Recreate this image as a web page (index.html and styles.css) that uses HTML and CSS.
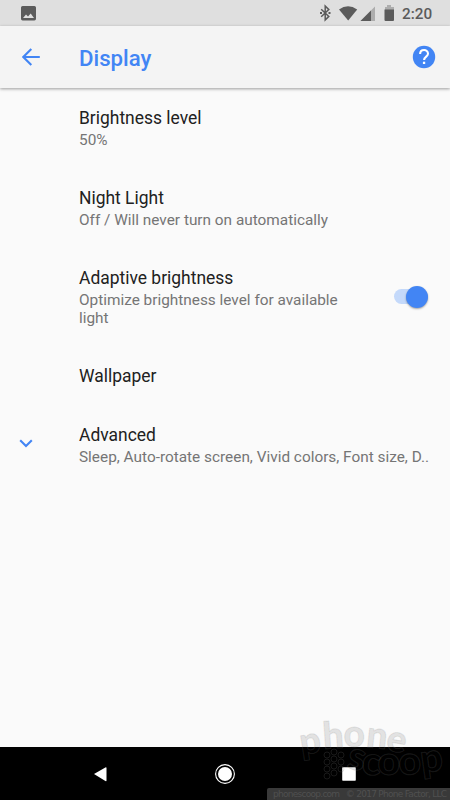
FILE: index.html
```html
<!DOCTYPE html>
<html lang="en">
<head>
<meta charset="utf-8">
<title>Display</title>
<link rel="stylesheet" href="styles.css">
</head>
<body>
<div class="screen">
  <div class="status">
    <svg class="picture" viewBox="0 0 15 15"><path fill-rule="evenodd" d="M1.6 0h11.8Q15 0 15 1.6v11.2q0 1.6-1.6 1.6H1.6Q0 14.400 0 12.800V1.600Q0 0 1.600 0zM2 12h11L9.700 7.400 7 10.600 5 8.600z"/></svg>
    <svg class="indicators" viewBox="0 0 80 18">
      <path class="bt" d="M2.200 5.200l7.600 7.200-3.600 3.600V2l3.600 3.600-7.600 7.200"/><path d="M1 8.100h2v2H1zM9.500 8.100h2v2h-2z"/>
      <path d="M20 5.400Q29 -1 38.200 5.400L29.200 16.500z"/>
      <path d="M41.500 17L56 2.500V17z" opacity=".38"/><path d="M41.500 17L52 6.500V17z"/>
      <path d="M68 1h4v2h3v4h-9V3h2z" opacity=".38"/><path d="M65.500 5.500h9.500V16q0 1-1 1h-7.500q-1 0-1-1z"/>
    </svg>
    <span class="time">2:20</span>
  </div>
  <header class="toolbar">
    <svg class="back" viewBox="0 0 18 18"><path d="M9.300 .9L1.300 9l8 8M1.300 9h16.500"/></svg>
    <h1>Display</h1>
    <svg class="help" viewBox="0 0 24 24"><circle cx="12" cy="12" r="11.200"/><path d="M8.100 9.100C8.100 3.700 16 3.800 16 8.800c0 2.700-3.900 3-3.900 6.200"/><path class="dot" d="M10.900 16.700h2.300V19h-2.300z"/></svg>
  </header>
  <main>
    <section class="row"><h2>Brightness level</h2><p>50%</p></section>
    <section class="row"><h2>Night Light</h2><p>Off / Will never turn on automatically</p></section>
    <section class="row adaptive">
      <div><h2>Adaptive brightness</h2><p>Optimize brightness level for available light</p></div>
      <span class="switch"><span class="thumb"></span></span>
    </section>
    <section class="row wallpaper"><h2>Wallpaper</h2></section>
    <section class="row advanced">
      <svg class="chevron" viewBox="0 0 14 9"><path d="M1.200 1.300L7 7l5.800-5.700"/></svg>
      <div><h2>Advanced</h2><p>Sleep, Auto-rotate screen, Vivid colors, Font size, D..</p></div>
    </section>
  </main>
  <nav>
    <svg viewBox="0 0 24 24"><path d="M6 12L17.400 5.400Q18.500 5 18.500 6v12.500q0 1-1.100.5z"/></svg>
    <svg viewBox="0 0 24 24"><circle cx="12" cy="12" r="7"/><circle class="ring" cx="12" cy="12" r="9.400"/></svg>
    <svg viewBox="0 0 24 24"><rect x="5.200" y="5.200" width="13.600" height="13.600" rx=".7"/></svg>
  </nav>
  <svg class="watermark" viewBox="0 0 184 85">
    <g class="honeycomb">
      <circle cx="61" cy="40" r="3"/><circle cx="68" cy="37" r="3"/><circle cx="75" cy="40" r="3"/>
      <circle cx="61" cy="47" r="3"/><circle cx="68" cy="44" r="3"/><circle cx="75" cy="47" r="3"/>
      <circle cx="61" cy="54" r="3"/><circle cx="68" cy="51" r="3"/><circle cx="75" cy="54" r="3"/>
      <circle cx="61" cy="61" r="3"/><circle cx="68" cy="58" r="3"/>
    </g>
    <g class="logo">
      <text transform="translate(35.500 40) rotate(-9)">p</text>
      <text transform="translate(57.500 34) rotate(-4)">h</text>
      <text transform="translate(77.500 32)">o</text>
      <text transform="translate(99.500 32) rotate(6)">n</text>
      <text transform="translate(119 35) rotate(10)">e</text>
      <text transform="translate(80 53) rotate(12) scale(1.060)">s</text>
      <text transform="translate(95 59) rotate(5) scale(1.060)">c</text>
      <text transform="translate(111.500 60) scale(1.060)">o</text>
      <text transform="translate(133 60) rotate(-3) scale(1.060)">o</text>
      <text transform="translate(156 58) rotate(-8) scale(1.060)">p</text>
    </g>
    <path class="strip" d="M1 85V75q0-2 2-2h181v12z"/>
    <text class="credit" x="7" y="82" textLength="174">phonescoop.com &#160; © 2017 Phone Factor, LLC</text>
  </svg>
</div>
</body>
</html>
```
FILE: styles.css
```css
* { box-sizing: border-box; }
body { margin: 0; font-family: Roboto, sans-serif; }
h1, h2, p { margin: 0; font-weight: 400; }
svg { display: block; flex: none; }
.screen { position: relative; width: 450px; height: 800px; overflow: hidden; display: flex; flex-direction: column; background: #fafafa; }
.status { height: 26px; flex: none; display: flex; align-items: flex-start; background: #dfdfdf; color: #5b5b5b; fill: #5b5b5b; }
.picture { width: 15px; height: 15px; margin: 6px 0 0 21px; }
.indicators { width: 80px; height: 18px; margin: 4px 0 0 283px; }
.bt { fill: none; stroke: #5b5b5b; stroke-width: 1.5; }
.time { margin: 4px 0 0 3px; font-size: 15.3px; line-height: 20px; font-weight: 500; }
.toolbar { position: relative; height: 62px; flex: none; display: flex; align-items: center; background: #f4f4f4; box-shadow: 0 1px 3px rgba(0,0,0,.38); }
.back { width: 18px; height: 18px; margin-left: 22px; fill: none; stroke: #4285f4; stroke-width: 2.1; }
h1 { margin-left: 39px; font-size: 22.2px; line-height: 28px; font-weight: 500; color: #4285f4; padding-top: 2px; }
.help { width: 24px; height: 24px; margin-left: auto; margin-right: 14.5px; fill: #4285f4; }
.help path { fill: none; stroke: #fff; stroke-width: 2.100; }
.help .dot { fill: #fff; stroke: none; }
main { flex: 1; }
.row { height: 80px; padding: 19px 21px 0 79px; }
h2 { font-size: 17.45px; line-height: 22px; color: #212121; }
p { font-size: 15.36px; line-height: 18px; color: #757575; margin-top: 2px; white-space: nowrap; }
.adaptive { height: 98px; display: flex; justify-content: space-between; }
.adaptive p { width: 280px; white-space: normal; }
.switch { width: 34px; height: 15px; margin: 22px 1px 0 0; border-radius: 8px; background: #c4d9fa; display: flex; align-items: center; justify-content: flex-end; }
.thumb { width: 22px; height: 22px; border-radius: 50%; background: #4285f4; box-shadow: 0 1px 2px rgba(0,0,0,.35); }
.wallpaper { height: 59px; }
.advanced { display: flex; padding-left: 19px; }
.chevron { width: 14px; height: 9px; margin: 15px 46px 0 0; fill: none; stroke: #4285f4; stroke-width: 2.1; }
nav { height: 53px; flex: none; display: flex; justify-content: space-between; align-items: center; padding: 0 89px 0 88px; background: #000; fill: #fff; }
nav svg { width: 24px; height: 24px; }
.ring { fill: none; stroke: #fff; stroke-width: 1.100; }
.watermark { position: absolute; left: 266px; top: 715px; width: 184px; height: 85px; overflow: visible; }
.honeycomb { fill: none; stroke: rgba(120,120,120,.25); stroke-width: .8; }
.logo { font: 900 37px Lato, sans-serif; fill: rgba(0,0,0,.1); stroke: rgba(128,128,128,.18); stroke-width: 1; }
.strip { fill: #393939; }
.credit { font: 9px "DejaVu Sans", sans-serif; fill: #505050; }
```
